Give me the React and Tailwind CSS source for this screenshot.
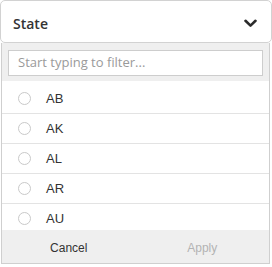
export default function App() {
  const items = ["AB", "AK", "AL", "AR", "AU"];
  return (
    <div className="w-[272px] h-[267px] bg-white flex flex-col">
      <div className="h-[43px] w-[272px] border border-[#d2d2d2] rounded-[5px] flex items-center justify-between pl-[12px] pr-[14px] pt-[3px]">
        <span className="text-[14px] font-semibold text-[#333]" style={{ fontFamily: '"Open Sans", sans-serif' }}>
          State
        </span>
        <svg width="13" height="9" viewBox="0 0 13 9" className="mt-[1px]">
          <path d="M1.5 1.8 L6.5 6.6 L11.5 1.8" fill="none" stroke="#2b2b2b" strokeWidth="2.6" strokeLinecap="round" strokeLinejoin="round" />
        </svg>
      </div>
      <div className="ml-[1px] w-[269px] h-[221px] border-x border-b border-[#cfcfcf] flex flex-col">
        <div className="h-[38px] bg-[#efefef] pt-[7px] px-[6px]">
          <div className="h-[26px] bg-white border border-[#cdcdcd] flex items-center pl-[9px]">
            <span className="text-[13px] text-[#9a9a9a]" style={{ fontFamily: '"Open Sans", sans-serif' }}>
              Start typing to filter...
            </span>
          </div>
        </div>
        <div className="h-[149px] overflow-hidden pt-[3px] bg-white" style={{ fontFamily: '"Liberation Sans", Arial, sans-serif' }}>
          {items.map((it) => (
            <div key={it} className="h-[30px] border-b border-[#e3e3e3] flex items-center pl-[16px]">
              <span className="w-[13px] h-[13px] shrink-0 rounded-full border border-[#c9c9c9] bg-white"></span>
              <span className="ml-[15px] text-[13px] text-[#333]">{it}</span>
            </div>
          ))}
        </div>
        <div className="flex-1 bg-[#efefef] flex items-center pt-[3px]" style={{ fontFamily: '"Liberation Sans", Arial, sans-serif' }}>
          <div className="flex-1 text-center text-[12px] text-[#333]">Cancel</div>
          <div className="flex-1 text-center text-[12px] text-[#b3b3b3]">Apply</div>
        </div>
      </div>
    </div>
  );
}
